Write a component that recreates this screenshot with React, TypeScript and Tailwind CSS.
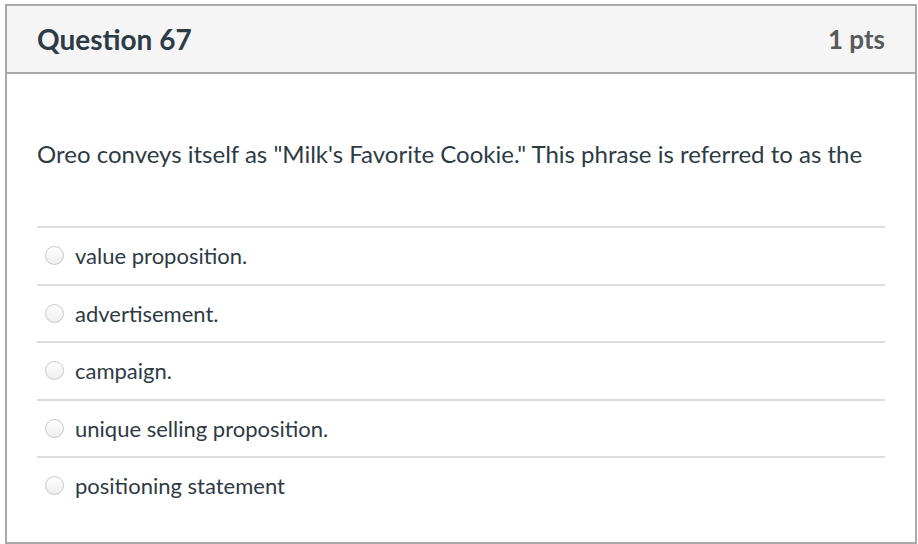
const answers = [
	"value proposition.",
	"advertisement.",
	"campaign.",
	"unique selling proposition.",
	"positioning statement",
];

export default function App() {
	return (
		<div className="pl-[5px] pt-[4px] font-['Lato',sans-serif] text-[#2d3b45]">
			<div className="w-[912px] h-[540px] border-2 border-[#a9a9a9] bg-white">
				{/* Header */}
				<div className="h-[68px] bg-[#f5f5f5] border-b-2 border-[#a9a9a9] flex items-center justify-between pl-[30px] pr-[30px]">
					<h2 className="text-[28px] font-bold leading-none">Question 67</h2>
					<span className="text-[26px] font-bold text-[#595959] leading-none">
						1 pts
					</span>
				</div>

				{/* Body */}
				<div className="px-[30px]">
					<p className="mt-[65px] text-[24px] leading-[30px]">
						Oreo conveys itself as "Milk's Favorite Cookie." This phrase is
						referred to as the
					</p>
					<ul className="mt-[57px] w-[848px]">
						{answers.map((a) => (
							<li
								key={a}
								className="h-[57.5px] border-t-2 border-[#dddddd] flex items-center pl-[8px]">
								<span className="w-[19px] h-[19px] rounded-full border border-[#c8c8c8] bg-gradient-to-b from-white to-[#eeeeee] shrink-0" />
								<span className="ml-[11px] text-[22px]">{a}</span>
							</li>
						))}
					</ul>
				</div>
			</div>
		</div>
	);
}
